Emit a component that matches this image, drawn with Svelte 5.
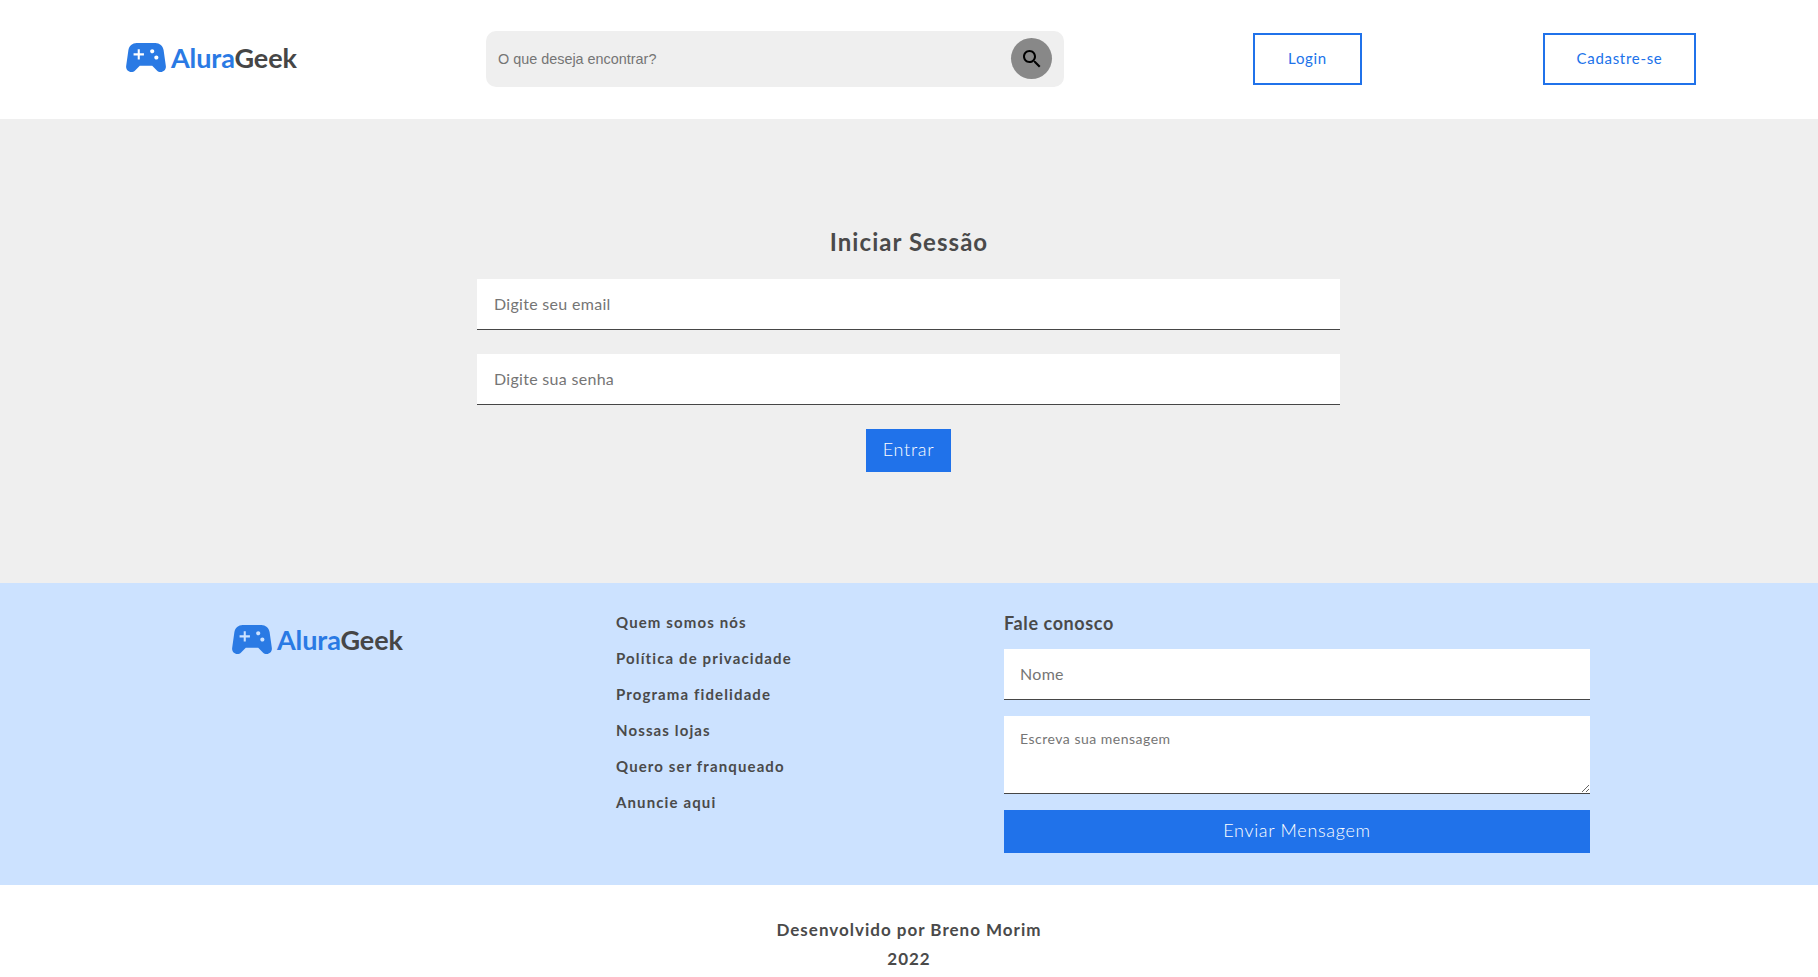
<script>
  const links = [
    'Quem somos nós',
    'Política de privacidade',
    'Programa fidelidade',
    'Nossas lojas',
    'Quero ser franqueado',
    'Anuncie aqui'
  ];
</script>

{#snippet logo()}
  <div class="logo">
    <svg width="40" height="29" viewBox="2.4 5 19.2 14" aria-hidden="true">
      <path fill="#2a7ae4" d="M21.58 16.09l-1.09-7.66C20.21 6.46 18.52 5 16.53 5H7.47C5.48 5 3.79 6.46 3.51 8.43l-1.09 7.66C2.2 17.63 3.39 19 4.94 19c.68 0 1.32-.27 1.8-.75L9 16h6l2.25 2.25c.48.48 1.13.75 1.8.75 1.56 0 2.75-1.37 2.53-2.91zM11 11H9v2H8v-2H6v-1h2V8h1v2h2v1zm4-1c-.55 0-1-.45-1-1s.45-1 1-1 1 .45 1 1-.45 1-1 1zm2 3c-.55 0-1-.45-1-1s.45-1 1-1 1 .45 1 1-.45 1-1 1z" />
    </svg>
    <span class="logo-text"><span class="alura">Alura</span>Geek</span>
  </div>
{/snippet}

<header class="header">
  <div class="header-logo">
    {@render logo()}
  </div>
  <div class="search">
    <input type="text" placeholder="O que deseja encontrar?" />
    <button class="search-btn" aria-label="Buscar">
      <svg width="24" height="24" viewBox="0 0 24 24">
        <path d="M15.5 14h-.79l-.28-.27C15.41 12.59 16 11.11 16 9.5 16 5.91 13.09 3 9.5 3S3 5.91 3 9.5 5.91 16 9.5 16c1.61 0 3.09-.59 4.23-1.57l.27.28v.79l5 4.99L20.49 19l-4.99-5zm-6 0C7.01 14 5 11.99 5 9.5S7.01 5 9.5 5 14 7.01 14 9.5 11.99 14 9.5 14z" />
      </svg>
    </button>
  </div>
  <a class="outline login" href="#login">Login</a>
  <a class="outline signup" href="#cadastro">Cadastre-se</a>
</header>

<main class="main">
  <h1>Iniciar Sessão</h1>
  <form class="login-form">
    <input class="field" type="email" placeholder="Digite seu email" />
    <input class="field" type="password" placeholder="Digite sua senha" />
    <button class="primary enter" type="button">Entrar</button>
  </form>
</main>

<footer class="footer">
  <div class="footer-logo">
    {@render logo()}
  </div>
  <ul class="links">
    {#each links as link}
      <li><a href="#link">{link}</a></li>
    {/each}
  </ul>
  <form class="contact">
    <h2>Fale conosco</h2>
    <input class="field small" type="text" placeholder="Nome" />
    <textarea class="field message" placeholder="Escreva sua mensagem"></textarea>
    <button class="primary send" type="button">Enviar Mensagem</button>
  </form>
</footer>

<div class="credits">
  <p>Desenvolvido por Breno Morim</p>
  <p>2022</p>
</div>

<style>
  :global(body) {
    margin: 0;
    background: #fff;
    font-family: 'Lato', 'Liberation Sans', sans-serif;
    color: #4a4a4a;
  }

  .header {
    box-sizing: border-box;
    height: 119px;
    padding: 0 0 2px 126px;
    display: grid;
    grid-template-columns: 360px 767px 290px 153px;
    align-items: center;
    background: #fff;
  }

  .header-logo {
    margin-bottom: 2px;
  }

  .logo {
    display: flex;
    align-items: center;
    gap: 5px;
  }

  .logo-text {
    font-size: 27px;
    line-height: 29px;
    font-weight: 700;
    letter-spacing: -0.1px;
    color: #464646;
  }

  .alura {
    color: #2a7ae4;
  }

  .search {
    box-sizing: border-box;
    width: 578px;
    height: 56px;
    padding: 0 12px;
    display: flex;
    align-items: center;
    justify-content: space-between;
    background: #efefef;
    border-radius: 10px;
  }

  .search input {
    flex: 1;
    border: 0;
    padding: 0;
    outline: 0;
    background: transparent;
    font-family: 'Liberation Sans', Arial, sans-serif;
    font-size: 14.4px;
  }

  .search-btn {
    width: 41px;
    height: 41px;
    padding: 0;
    border: 0;
    border-radius: 50%;
    background: #888;
    display: flex;
    align-items: center;
    justify-content: center;
  }

  .outline {
    box-sizing: border-box;
    height: 52px;
    padding-bottom: 2px;
    display: flex;
    align-items: center;
    justify-content: center;
    border: 2px solid #2072ea;
    color: #2072ea;
    font-size: 15px;
    letter-spacing: 0.7px;
    text-decoration: none;
  }

  .login {
    width: 109px;
  }

  .signup {
    width: 153px;
  }

  .main {
    box-sizing: border-box;
    height: 464px;
    padding-top: 108px;
    background: #efefef;
    display: flex;
    flex-direction: column;
    align-items: center;
  }

  h1 {
    margin: 0 0 22px;
    font-size: 24px;
    line-height: 30px;
    font-weight: 700;
    letter-spacing: 1.05px;
    color: #4a4a4a;
  }

  .login-form {
    width: 863px;
    margin-right: 1px;
    display: flex;
    flex-direction: column;
    align-items: center;
    gap: 24px;
  }

  .field {
    box-sizing: border-box;
    display: block;
    width: 100%;
    height: 51px;
    padding: 0 17px 2px;
    border: 0;
    border-bottom: 1px solid #464646;
    border-radius: 0;
    outline: 0;
    background: #fff;
    font-family: 'Lato', 'Liberation Sans', sans-serif;
    font-size: 16px;
    letter-spacing: 0.3px;
  }

  .primary {
    padding: 0 0 3px;
    border: 0;
    background: #2072ea;
    color: #fff;
    font-family: 'Lato', 'Liberation Sans', sans-serif;
    font-weight: 300;
    font-size: 18px;
    letter-spacing: 0.7px;
  }

  .enter {
    width: 85px;
    height: 43px;
  }

  .footer {
    box-sizing: border-box;
    height: 302px;
    padding: 29px 0 0 232px;
    display: grid;
    grid-template-columns: 384px 388px 586px;
    align-items: start;
    background: #cce2ff;
  }

  .footer-logo {
    padding-top: 13px;
  }

  .links {
    list-style: none;
    margin: 0;
    padding: 0;
    display: flex;
    flex-direction: column;
    gap: 16px;
  }

  .links li {
    line-height: 20px;
    font-size: 15px;
    font-weight: 700;
    letter-spacing: 1.12px;
  }

  .links a {
    color: #4a4a4a;
    text-decoration: none;
  }

  .contact {
    display: flex;
    flex-direction: column;
  }

  h2 {
    margin: 0 0 15px;
    line-height: 22px;
    font-size: 18px;
    font-weight: 700;
    letter-spacing: 0.6px;
    color: #4a4a4a;
  }

  .small {
    padding: 0 16px 2px;
    margin-bottom: 16px;
  }

  .message {
    height: 78px;
    padding: 14px 16px;
    margin-bottom: 16px;
    font-size: 14px;
    letter-spacing: 0.5px;
    resize: vertical;
  }

  .send {
    height: 43px;
  }

  .credits {
    height: 92px;
    box-sizing: border-box;
    padding-top: 30px;
    text-align: center;
    background: #fff;
  }

  .credits p {
    margin: 0;
    line-height: 29px;
    font-size: 17px;
    font-weight: 700;
    letter-spacing: 1px;
    color: #4a4a4a;
  }
</style>
